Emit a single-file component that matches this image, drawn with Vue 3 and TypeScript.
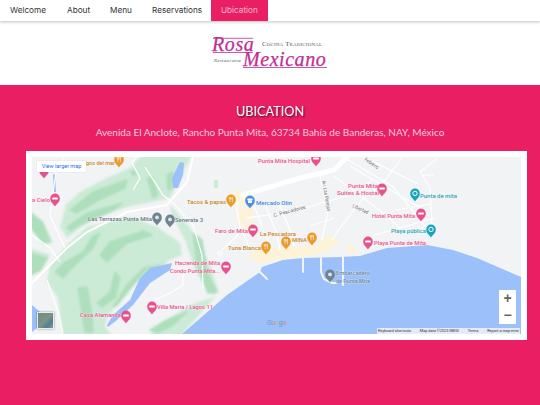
<template>
  <div class="page">
    <nav class="topnav">
      <a v-for="item in navItems" :key="item.label" class="nav-link" :class="{ active: item.label === 'Ubication' }" :style="{ width: item.w + 'px' }">{{ item.label }}</a>
    </nav>

    <header class="brand">
      <svg class="logo" width="120" height="44" viewBox="210 30 120 44">
        <g fill="none" stroke="#c02e94" stroke-width="0.8">
          <path d="M213 38.3H253M213 52.5H253M243 67.5H327" />
        </g>
        <text x="212" y="51" class="logo-script rosa">Rosa</text>
        <text x="243" y="66" class="logo-script mex">Mexicano</text>
        <text x="262" y="46" class="logo-cocina" textLength="60">Cocina Tradicional</text>
        <text x="214" y="62" class="logo-rest" textLength="27">Restaurante</text>
      </svg>
    </header>

    <section class="location">
      <h2>UBICATION</h2>
      <p>Avenida El Anclote, Rancho Punta Mita, 63734 Bahía de Banderas, NAY, México</p>

      <div class="map-card">
        <div class="map">
          <svg class="map-art" width="489" height="177" viewBox="32 157 489 177">
            <defs>
              <filter id="soft" x="-5%" y="-5%" width="110%" height="110%">
                <feGaussianBlur stdDeviation="0.8" />
              </filter>
            </defs>
            <rect x="32" y="157" width="489" height="177" fill="#f1f3f4" />

            <!-- golf course green -->
            <g fill="#cbebd6" filter="url(#soft)">
              <path d="M60 227L66 205 80 192 107 178 130 168 137 160 143 155H192L187 165 170 198 127 207 90 220 67 238Z" />
              <path d="M50 265L67 245 87 227 130 217 157 227 180 243 182 255 163 263 140 270 123 295 107 318 105 327 113 337H63L58 298 47 282Z" />
              <path d="M170 205L190 228 200 245 210 265 218 290 214 296 205 285 195 270 185 240 172 215Z" />
              <path d="M215 297L205 308 180 337H147L170 318 190 305Z" />
              <path d="M29 210L43 222 53 242 43 245 29 225Z" />
              <path d="M29 248L50 255 43 268 29 278Z" />
            </g>

            <!-- darker fairways -->
            <g fill="#aedfbc" stroke="#aedfbc" stroke-width="1.4" stroke-linejoin="round" filter="url(#soft)">
              <path d="M70 210L93 192 127 180 125 188 103 198 77 213Z" />
              <path d="M67 227L87 213 123 203 113 210 80 225 70 231Z" />
              <path d="M147 178L152 177 158 195 153 198Z" />
              <path d="M167 175L173 172 172 188 168 190Z" />
              <path d="M131 172L135 171 136 175 132 175Z" />
              <path d="M55 272L65 262 83 252 92 237 100 233 93 248 73 267 63 278Z" />
              <path d="M100 255L110 242 143 231 152 235 127 243 107 262Z" />
              <path d="M97 303L110 292 115 272 120 278 115 298 102 307Z" />
              <path d="M113 307L127 285 143 268 166 263 147 270 133 285 117 305Z" />
              <path d="M78 288L87 287 92 315 93 332 85 332Z" />
              <path d="M193 233L202 240 207 272 217 292 208 293 197 265Z" />
              <path d="M150 330L163 322 187 312 173 325 157 333Z" />
              <path d="M29 212L42 222 50 242 43 242 29 225Z" />
              <path d="M29 253L47 258 40 270 29 275Z" />
            </g>
            <rect x="214" y="180" width="4" height="8" fill="#cbebd6" />

            <!-- lagoons and sea -->
            <g fill="#9cc0f9">
              <path d="M172 178L180 162 184 163 183 175 178 188 173 188Z" />
              <path d="M107 325L113 315 130 300 140 278 150 268 172 263 170 270 150 283 133 305 117 320 108 327Z" />
              <path d="M32 305L40 312 37 328 32 332Z" />
              <path d="M53 175L55 174 56 192 54 192Z" />
              <path d="M182 334L227 295 260 272 262 267 283 260 303 258 340 257 360 256 387 248 427 245 453 250 477 258 521 277V334Z" />
            </g>

            <!-- beach -->
            <g fill="#fdf3d8">
              <path d="M234 190L243 190 246 205 236 208Z" />
              <path d="M236 210L252 206 254 220 238 224Z" />
              <path d="M238 226L254 222 256 232 242 234Z" />
              <path d="M248 257L253 250 317 245 327 235 340 240 327 252 300 257 260 263Z" />
              <path d="M346 246L352 244 356 252 348 254Z" />
            </g>

            <!-- roads -->
            <g fill="none" stroke="#fff" stroke-width="1.2">
              <path d="M32 283L67 248 87 232 127 212 167 205 187 182 193 157" stroke-width="2" />
              <path d="M145 167L163 195 173 203 193 225 202 255 203 288" />
              <path d="M133 190L140 178 132 163 136 157" />
              <path d="M47 280L58 312 63 334" />
              <path d="M64 157L56 172 50 215 60 238 65 248" />
              <path d="M32 235L50 248 60 262" />
              <path d="M183 275L183 285 170 293 155 300" />
              <path d="M222 250L238 235 240 226" />
              <circle cx="220" cy="253" r="2" />
              <path d="M243 196L236 206 240 226 250 250" />
              <path d="M246 218L290 212 326 202 360 192 372 180" />
              <path d="M254 206L262 226 272 252" />
              <path d="M265 204L276 232 280 250" />
              <path d="M278 202L290 230 294 246" />
              <path d="M320 176L328 212 322 240" />
              <path d="M310 226L334 218" />
              <path d="M345 158L392 186 404 200 430 232" />
              <path d="M334 176L382 212 400 228" />
              <path d="M350 166L424 210" />
              <path d="M366 158L418 184" />
              <path d="M402 158L382 184 362 200 340 228 332 240" />
              <path d="M438 158L420 172 430 188 432 225" />
              <path d="M422 175H434" />
              <path d="M372 236L434 218" />
              <path d="M396 210L430 204" />
            </g>
            <path d="M243 195L300 178 334 170 347 157" fill="none" stroke="#fff" stroke-width="5" stroke-linecap="round" stroke-linejoin="round" />

            <!-- pier -->
            <g fill="none" stroke="#f1f3f4" stroke-width="2" stroke-linecap="round">
              <path d="M303 258V272" />
              <path d="M321 258V272L324 279 332 283H336" />
              <path d="M343 257V285" />
              <path d="M260 272L267 279" />
            </g>

            <!-- poi pins -->
            <g v-for="p in pins" :key="p.x + '-' + p.y" :transform="`translate(${p.x} ${p.y})`">
              <path :fill="colors[p.kind]" d="M0 6.6C-1 4.2-4.8 2.4-4.8-1.6a4.8 4.8 0 0 1 9.6 0C4.8 2.4 1 4.2 0 6.6Z" />
              <path v-if="p.kind === 'food'" d="M-1.7-4V-2.2L-1-1.4V1.2M-1-4V-1.4M-.3-4V-2.2L-1-1.4M1.4-4V1.2M1.4-4C.7-3.4.6-2 1.4-1.2" fill="none" stroke="#fff" stroke-width=".55" />
              <rect v-else-if="p.kind === 'hotel'" x="-2.8" y="-2.6" width="5.6" height="2.2" rx=".5" fill="#fff" />
              <circle v-else-if="p.kind === 'cam'" cy="-1.6" r="2.2" fill="none" stroke="#fff" stroke-width="1" />
              <circle v-else-if="p.kind === 'poi'" cy="-1.6" r="1.9" fill="#dfe5ea" />
              <path v-else d="M-2.4-3.4H2.4L2.8-1.8H-2.8ZM-2-1.4H2V1H-2Z" fill="#fff" />
            </g>

            <!-- labels -->
            <text v-for="l in labels" :key="l.text + l.y" :x="l.x" :y="l.y" :fill="l.color" :textLength="l.w" lengthAdjust="spacingAndGlyphs" class="poi">{{ l.text }}</text>
            <text class="street" transform="translate(322 181) rotate(80)" textLength="31" lengthAdjust="spacingAndGlyphs">Av. Las Parejas</text>
            <text class="street" transform="translate(274 217) rotate(-15)" textLength="33" lengthAdjust="spacingAndGlyphs">C. Pescadores</text>
            <text class="street" transform="translate(352 207) rotate(25)" textLength="17" lengthAdjust="spacingAndGlyphs">Libertad</text>
            <text class="street" transform="translate(364 160) rotate(35)" textLength="16" lengthAdjust="spacingAndGlyphs">Febrero</text>
            <text x="267" y="325" class="google" textLength="20" lengthAdjust="spacingAndGlyphs"><tspan fill="#6f94c8">G</tspan><tspan fill="#c98a8a">o</tspan><tspan fill="#c9b880">o</tspan><tspan fill="#6f94c8">g</tspan><tspan fill="#8ab08a">l</tspan><tspan fill="#c98a8a">e</tspan></text>
          </svg>

          <a class="larger-map">View larger map</a>
          <div class="pegman"></div>

          <div class="zoom-ctl">
            <span>+</span>
            <span>−</span>
          </div>

          <div class="attribution">
            <span>Keyboard shortcuts</span>
            <span>Map data ©2023 INEGI</span>
            <span>Terms</span>
            <span>Report a map error</span>
          </div>
        </div>
      </div>
    </section>
  </div>
</template>

<script setup lang="ts">
type PinKind = 'food' | 'hotel' | 'poi' | 'cam' | 'shop'

const navItems = [
  { label: 'Welcome', w: 57 },
  { label: 'About', w: 43 },
  { label: 'Menu', w: 42 },
  { label: 'Reservations', w: 69 },
  { label: 'Ubication', w: 57 },
]

const PINK = '#e8528c'
const ORANGE = '#c9821f'
const GREY = '#66757f'
const TEAL = '#2aa0b5'

const colors: Record<PinKind, string> = {
  food: '#ea9a28',
  hotel: '#e8528c',
  poi: '#6f8390',
  cam: '#16a5bd',
  shop: '#4a90e8',
}

const pins: { x: number; y: number; kind: PinKind }[] = [
  { x: 119, y: 161, kind: 'food' },
  { x: 44, y: 172, kind: 'hotel' },
  { x: 55, y: 200, kind: 'hotel' },
  { x: 157, y: 219, kind: 'poi' },
  { x: 170, y: 221, kind: 'poi' },
  { x: 231, y: 201, kind: 'food' },
  { x: 250, y: 202, kind: 'shop' },
  { x: 253, y: 231, kind: 'hotel' },
  { x: 286, y: 243, kind: 'food' },
  { x: 312, y: 239, kind: 'food' },
  { x: 266, y: 248, kind: 'food' },
  { x: 316, y: 160, kind: 'hotel' },
  { x: 382, y: 190, kind: 'hotel' },
  { x: 415, y: 195, kind: 'cam' },
  { x: 421, y: 215, kind: 'hotel' },
  { x: 431, y: 231, kind: 'cam' },
  { x: 368, y: 243, kind: 'hotel' },
  { x: 226, y: 268, kind: 'hotel' },
  { x: 152, y: 308, kind: 'hotel' },
  { x: 126, y: 317, kind: 'hotel' },
  { x: 330, y: 276, kind: 'poi' },
]

const labels = [
  { text: 'gos del mar', x: 86, y: 165, w: 29, color: ORANGE },
  { text: 'a Cielo', x: 32, y: 202, w: 18, color: PINK },
  { text: 'Las Terrazas Punta Mita', x: 88, y: 221, w: 64, color: GREY },
  { text: 'Senerata 3', x: 175, y: 222, w: 28, color: GREY },
  { text: 'Tacos & papas', x: 187, y: 204, w: 39, color: ORANGE },
  { text: 'Mercado Olin', x: 256, y: 205, w: 36, color: '#3b86e0' },
  { text: 'Faro de Mita', x: 215, y: 233, w: 33, color: PINK },
  { text: 'La Pescadora', x: 260, y: 236, w: 36, color: ORANGE },
  { text: 'MINA', x: 292, y: 242, w: 15, color: ORANGE },
  { text: 'Tuna Blanca', x: 228, y: 250, w: 33, color: ORANGE },
  { text: 'Punta Mita Hospital', x: 258, y: 163, w: 52, color: PINK },
  { text: 'Punta Mita', x: 348, y: 187.5, w: 30, color: PINK },
  { text: 'Suites & Hostal', x: 337, y: 195, w: 42, color: PINK },
  { text: 'Punta de mita', x: 420, y: 198, w: 37, color: TEAL },
  { text: 'Hotel Punta Mita', x: 372, y: 218, w: 43, color: PINK },
  { text: 'Playa pública', x: 391, y: 233, w: 35, color: TEAL },
  { text: 'Playa Punta de Mita', x: 374, y: 245, w: 52, color: PINK },
  { text: 'Hacienda de Mita', x: 175, y: 265, w: 45, color: PINK },
  { text: 'Condo Punta Mita...', x: 170, y: 272.5, w: 50, color: PINK },
  { text: 'Villa María / Lagos 11', x: 157, y: 309, w: 56, color: PINK },
  { text: 'Casa Alamanda', x: 80, y: 317, w: 41, color: PINK },
  { text: 'Embarcadero', x: 336, y: 275, w: 34, color: '#5f7f96' },
  { text: 'de Punta Mita', x: 336, y: 282.5, w: 34, color: '#5f7f96' },
]
</script>

<style scoped>
.page {
  width: 540px;
  height: 405px;
  overflow: hidden;
  background: #e91e63;
  font-family: Lato, "Liberation Sans", sans-serif;
}

.topnav {
  display: flex;
  height: 21px;
  background: #fff;
  box-shadow: 0 1px 3px rgba(0, 0, 0, 0.25);
  position: relative;
}

.nav-link {
  box-sizing: border-box;
  padding-left: 10px;
  line-height: 21px;
  font-family: Inter, "Liberation Sans", sans-serif;
  font-size: 8.2px;
  color: #333;
  white-space: nowrap;
}

.nav-link.active {
  background: #e91e63;
  color: #f8bbd0;
}

.brand {
  height: 64px;
  background: #fff;
  display: flex;
  justify-content: center;
  align-items: flex-start;
  padding-top: 9px;
  box-sizing: border-box;
}

.logo {
  display: block;
}

.logo-script {
  font-family: "Liberation Serif", serif;
  font-style: italic;
  fill: #c02e94;
  stroke: #c02e94;
  stroke-width: 0.25px;
}

.rosa {
  font-size: 20px;
  letter-spacing: 0.6px;
}

.mex {
  font-size: 20px;
  letter-spacing: 0.55px;
}

.logo-cocina {
  font-family: "Liberation Serif", serif;
  font-size: 7px;
  font-variant: small-caps;
  fill: #5a5a5a;
}

.logo-rest {
  font-family: "Liberation Serif", serif;
  font-style: italic;
  font-size: 4.8px;
  fill: #555;
}

.location {
  padding: 18px 26px 0;
  text-align: center;
}

.location h2 {
  margin: 0;
  font-size: 12.7px;
  line-height: 17px;
  font-weight: 400;
  color: #fff;
  text-shadow: 1px 1px 2px rgba(0, 0, 0, 0.7);
}

.location p {
  margin: 5px 0 0;
  font-size: 10px;
  line-height: 14px;
  color: #fbcbdc;
  white-space: nowrap;
}

.map-card {
  margin-top: 12px;
  width: 501px;
  box-sizing: border-box;
  padding: 6px;
  background: #fff;
}

.map {
  position: relative;
  width: 489px;
  height: 177px;
  overflow: hidden;
}

.map-art {
  display: block;
}

.poi {
  font-family: Roboto, sans-serif;
  font-size: 6.2px;
  font-weight: 500;
  paint-order: stroke;
  stroke: rgba(255, 255, 255, 0.7);
  stroke-width: 0.7px;
}

.street {
  font-family: Roboto, sans-serif;
  font-size: 5.2px;
  fill: #666;
  paint-order: stroke;
  stroke: #fff;
  stroke-width: 0.8px;
}

.google {
  font-family: "Liberation Sans", sans-serif;
  font-size: 7px;
}

.larger-map {
  position: absolute;
  left: 5px;
  top: 4px;
  width: 49px;
  height: 11px;
  background: #fff;
  color: #1a73e8;
  font: 5.5px/11px Roboto, sans-serif;
  text-align: center;
  box-shadow: 0 0 1px rgba(0, 0, 0, 0.2);
}

.pegman {
  position: absolute;
  left: 5px;
  top: 155px;
  width: 17px;
  height: 17px;
  border: 1px solid #e8ece8;
  box-sizing: border-box;
  background: linear-gradient(135deg, #6f8a7a 0%, #7d9488 50%, #4e7f96 75%, #889c94 100%);
  box-shadow: 0 0 2px rgba(0, 0, 0, 0.4);
}

.zoom-ctl {
  position: absolute;
  left: 467px;
  top: 133px;
  width: 17px;
  height: 34px;
  background: #fff;
  display: flex;
  flex-direction: column;
}

.zoom-ctl span {
  flex: 1;
  font: 700 14px/17px "Liberation Sans", sans-serif;
  color: #666;
  text-align: center;
}

.attribution {
  position: absolute;
  left: 345px;
  top: 171px;
  width: 143px;
  height: 6px;
  background: rgba(245, 245, 245, 0.8);
  display: flex;
  justify-content: space-between;
  padding: 0 1px;
  box-sizing: border-box;
  font: 3.8px/6px Roboto, sans-serif;
  color: #333;
  white-space: nowrap;
}
</style>
